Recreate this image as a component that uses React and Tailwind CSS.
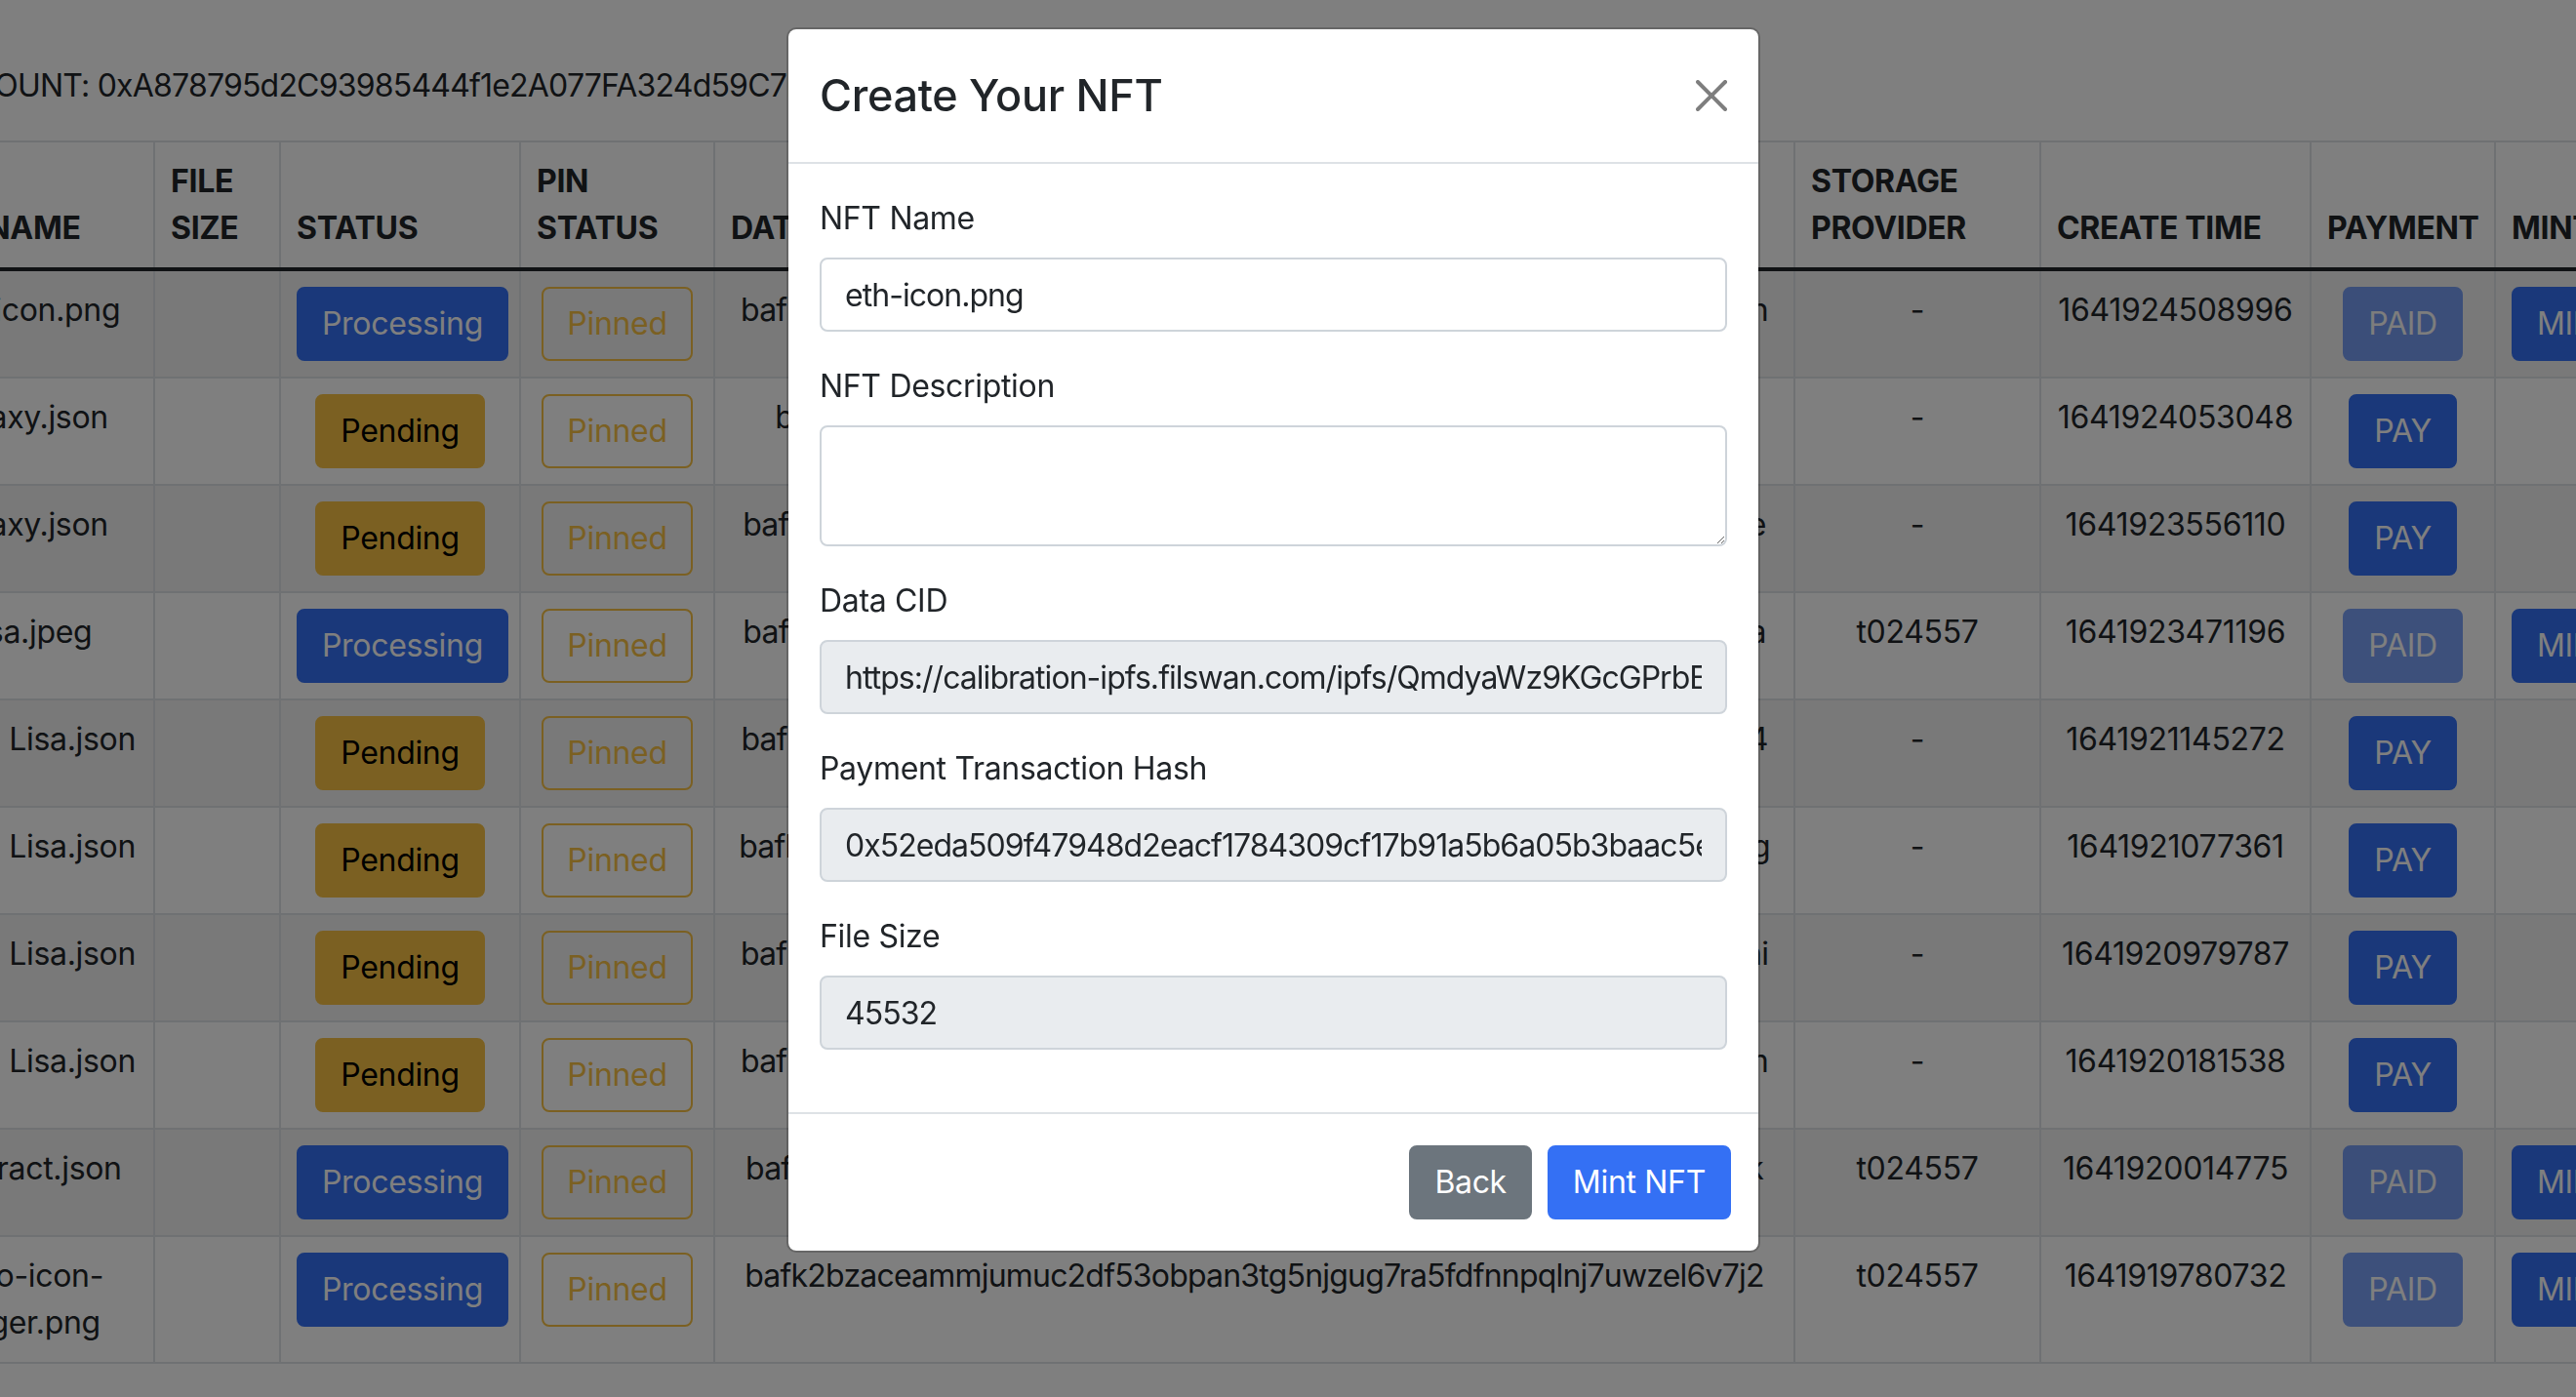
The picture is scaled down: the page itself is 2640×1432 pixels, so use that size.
import React from "react";

/* --------------------------- DATA ---------------------------- */
const rows = [
  { name: "eth-icon.png", cid: "bafk2bzacedxlmpo3kq5r2t7yzvwhu6sjn4ifgbcea3wqpl5xz7ntkrhm2yosn", provider: "-", time: "1641924508996", paid: true },
  { name: "galaxy.json", cid: "bafkreihdwdcefgh4dqkjv67uzcmw7ojee6xedzdetojuzjevtenxquvyku", provider: "-", time: "1641924053048", paid: false },
  { name: "galaxy.json", cid: "bafk2bzacebmwhrj4kq2ylxafpzgo6wtqv7m3uoyhnebw5rdkgjtfqoa3uzae", provider: "-", time: "1641923556110", paid: false },
  { name: "Lisa.jpeg", cid: "bafk2bzacecwq3ob5p7dhxh4aubdvz2f4rjdc6oxlx4tlyyrnuqe2gbq4kfs2a", provider: "t024557", time: "1641923471196", paid: true },
  { name: "Mona Lisa.json", cid: "bafk2bzaceb3tyl2ifqpcjvhuoqyn6hpc5nsfx4ywbbtl3rld2smpbvzhxq2tia4", provider: "-", time: "1641921145272", paid: false },
  { name: "Mona Lisa.json", cid: "bafk2bzacea7w2fy6nxuqk5iqdfwhy2lb4e3vrjsg6iyxqtd4j2fcu6mo5xnijzg", provider: "-", time: "1641921077361", paid: false },
  { name: "Mona Lisa.json", cid: "bafk2bzaceed5bsyv3lqdyxt7jb3ksgfa5oi4g6fxv6yp7wjr3zpqdyrce4y3tni", provider: "-", time: "1641920979787", paid: false },
  { name: "Mona Lisa.json", cid: "bafk2bzacecmhwq6ebxjon3vcw7vemr2u4dqzu2wh6kdbnf5qyr3tlgpa7m", provider: "-", time: "1641920181538", paid: false },
  { name: "contract.json", cid: "bafk2bzacedwvx4oc7eqhua3hbkrn2qzfjtx6wpyg5onb7ylhqoue2ob3zdk", provider: "t024557", time: "1641920014775", paid: true },
  { name: "logo-icon-\nlarger.png", cid: "bafk2bzaceammjumuc2df53obpan3tg5njgug7ra5fdfnnpqlnj7uwzel6v7j2", provider: "t024557", time: "1641919780732", paid: true },
];

const headers = ["File Name", "File Size", "Status", "Pin Status", "Data CID", "Storage Provider", "Create Time", "Payment", "Mint"];

const fields = [
  { label: "NFT Name", value: "eth-icon.png" },
  { label: "NFT Description", textarea: true },
  { label: "Data CID", value: "https://calibration-ipfs.filswan.com/ipfs/QmdyaWz9KGcGPrbEfWcFk7Kv2mbbBy2LDiNeXxy5BfBbQ4", readOnly: true },
  { label: "Payment Transaction Hash", value: "0x52eda509f47948d2eacf1784309cf17b91a5b6a05b3baac5e1d6f7a8b9c0d1e2", readOnly: true },
  { label: "File Size", value: "45532", readOnly: true },
];

/* --------------------------- BUTTONS ---------------------------- */
const btnBase = "inline-block whitespace-nowrap rounded-[8px] border-2 px-6 py-3 text-[32px] leading-[48px]";

const Primary = ({ children, disabled }) => (
  <button className={`${btnBase} border-[#3470f4] bg-[#3470f4] text-white ${disabled ? "opacity-65" : ""}`}>
    {children}
  </button>
);

const Warning = ({ children }) => (
  <button className={`${btnBase} border-[#f7c144] bg-[#f7c144] text-black`}>{children}</button>
);

const OutlineWarning = ({ children }) => (
  <button className={`${btnBase} border-[#f7c144] bg-transparent text-[#f7c144]`}>{children}</button>
);

/* --------------------------- CLOSE ICON ---------------------------- */
const CloseIcon = () => (
  <svg viewBox="0 0 16 16" className="h-8 w-8" fill="#000">
    <path d="M.293.293a1 1 0 0 1 1.414 0L8 6.586 14.293.293a1 1 0 1 1 1.414 1.414L9.414 8l6.293 6.293a1 1 0 0 1-1.414 1.414L8 9.414l-6.293 6.293a1 1 0 0 1-1.414-1.414L6.586 8 .293 1.707a1 1 0 0 1 0-1.414z" />
  </svg>
);

const td = "border-2 border-[#dee2e6] p-4 text-center align-top";

export default function App() {
  return (
    <div className="relative min-h-screen w-full overflow-hidden bg-white font-[Inter,Liberation_Sans,sans-serif] tracking-[-0.02em] text-[#212529]">
      {/* PAGE BEHIND THE MODAL */}
      <div className="-ml-[103px] w-[2919px] pt-[64px]">
        <p className="mb-8 ml-[32px] text-[32px] leading-[48px] tracking-[-0.025em]">
          ACCOUNT: 0xA878795d2C93985444f1e2A077FA324d59C7b6E1
        </p>

        <table className="w-[2919px] table-fixed border-collapse text-[32px] leading-[48px]">
          <colgroup>
            <col className="w-[260px]" />
            <col className="w-[129px]" />
            <col className="w-[246px]" />
            <col className="w-[199px]" />
            <col className="w-[1107px]" />
            <col className="w-[252px]" />
            <col className="w-[277px]" />
            <col className="w-[189px]" />
            <col className="w-[260px]" />
          </colgroup>
          <thead>
            <tr>
              {headers.map((h) => (
                <th
                  key={h}
                  className="border-2 border-[#dee2e6] border-b-[4px] border-b-[#212529] p-4 text-left align-bottom font-bold uppercase"
                >
                  {h === "Payment" || h === "Create Time" || h === "File Name" ? (
                    <span className="whitespace-nowrap">{h}</span>
                  ) : (
                    h
                  )}
                </th>
              ))}
            </tr>
          </thead>
          <tbody>
            {rows.map((r, i) => (
              <tr key={i} className={i % 2 === 0 ? "bg-[#f2f2f2]" : "bg-white"}>
                <td className={`${td} whitespace-pre`}>{r.name}</td>
                <td className={td}></td>
                <td className={td}>
                  {r.paid ? <Primary>Processing</Primary> : <Warning>Pending</Warning>}
                </td>
                <td className={td}>
                  <OutlineWarning>Pinned</OutlineWarning>
                </td>
                <td className={`${td} whitespace-nowrap tracking-[-0.025em]`}>{r.cid}</td>
                <td className={td}>{r.provider}</td>
                <td className={td}>{r.time}</td>
                <td className={td}>
                  {r.paid ? <Primary disabled>PAID</Primary> : <Primary>PAY</Primary>}
                </td>
                <td className="border-2 border-[#dee2e6] p-4 text-left align-top">
                  {r.paid && <Primary>MINT</Primary>}
                </td>
              </tr>
            ))}
          </tbody>
        </table>
      </div>

      {/* BACKDROP */}
      <div className="fixed inset-0 bg-black/50" />

      {/* MODAL */}
      <div className="fixed left-[806px] top-[28px] w-[998px] rounded-[10px] border-2 border-black/20 bg-white bg-clip-padding">
        <div className="flex items-center justify-between border-b-2 border-[#dee2e6] p-8">
          <h5 className="text-[45px] font-medium leading-[72px]">Create Your NFT</h5>
          <button className="opacity-50">
            <CloseIcon />
          </button>
        </div>

        <div className="p-8">
          {fields.map((f) => (
            <div key={f.label} className="mb-8">
              <label className="mb-4 block text-[32px] leading-[48px]">{f.label}</label>
              {f.textarea ? (
                <textarea
                  rows={2}
                  className="block h-[124px] w-full rounded-[8px] border-2 border-[#ced4da] bg-white px-6 py-3 text-[32px] leading-[48px] outline-none"
                />
              ) : (
                <input
                  readOnly
                  value={f.value}
                  className={`block h-[76px] w-full rounded-[8px] border-2 border-[#ced4da] px-6 text-[32px] leading-[48px] tracking-[-0.03em] text-[#212529] outline-none ${
                    f.readOnly ? "bg-[#e9ecef]" : "bg-white"
                  }`}
                />
              )}
            </div>
          ))}
        </div>

        <div className="flex justify-end border-t-2 border-[#dee2e6] py-6 pl-6 pr-5">
          <button className="m-2 rounded-[8px] border-2 border-[#6c757d] bg-[#6c757d] px-6 py-3 text-[32px] leading-[48px] text-white">
            Back
          </button>
          <button className="m-2 rounded-[8px] border-2 border-[#3470f4] bg-[#3470f4] px-6 py-3 text-[32px] leading-[48px] text-white">
            Mint NFT
          </button>
        </div>
      </div>
    </div>
  );
}
